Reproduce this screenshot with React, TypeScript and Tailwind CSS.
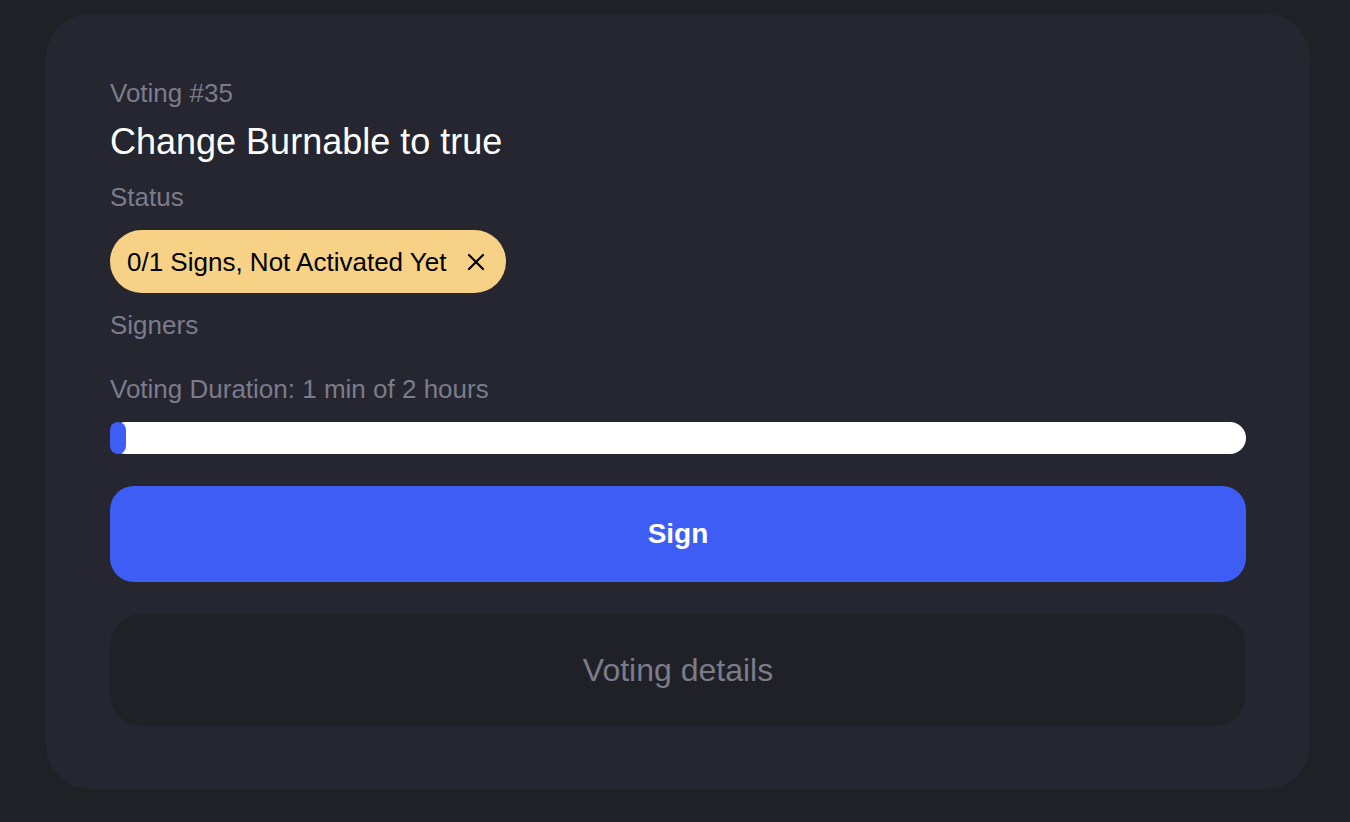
import React from "react";

export default function App() {
  return (
    <div
      className="min-h-screen bg-[#202126] pl-[46px] pr-[40px] pt-[14px] pb-[33px]"
      style={{ fontFamily: '"Liberation Sans", Arial, sans-serif' }}
    >
      <div className="rounded-[44px] bg-[#252630] px-16 pt-[63px] pb-[63px] flex flex-col">
        <div className="text-[26px] leading-[32px] text-[#7b7c8b]">Voting #35</div>
        <div className="mt-[13px] text-[36px] leading-[40px] text-white">Change Burnable to true</div>
        <div className="mt-[19px] text-[26px] leading-[32px] text-[#7b7c8b]">Status</div>
        <div className="mt-[17px] flex">
          <div className="flex h-[63px] items-center gap-[20px] rounded-full bg-[#f6d186] pl-[17px] pr-[20px]">
            <span className="text-[26px] leading-[32px] text-black">0/1 Signs, Not Activated Yet</span>
            <svg width="20" height="20" viewBox="0 0 20 20" className="shrink-0">
              <path d="M3 3 L17 17 M17 3 L3 17" stroke="#000" strokeWidth="2.2" strokeLinecap="round" />
            </svg>
          </div>
        </div>
        <div className="mt-[16px] text-[26px] leading-[32px] text-[#7b7c8b]">Signers</div>
        <div className="mt-[32px] text-[26px] leading-[32px] text-[#7b7c8b]">Voting Duration: 1 min of 2 hours</div>
        <div className="mt-[17px] h-[32px] w-full rounded-full bg-white">
          <div className="h-full w-[16px] rounded-full bg-[#3d5df5]" />
        </div>
        <button className="mt-[32px] flex h-[96px] w-full items-center justify-center rounded-[24px] bg-[#3d5df5] text-[28px] font-bold text-white">
          Sign
        </button>
        <button className="mt-[32px] flex h-[112px] w-full items-center justify-center rounded-[32px] bg-[#202126] text-[32px] text-[#7b7c8b]">
          Voting details
        </button>
      </div>
    </div>
  );
}
